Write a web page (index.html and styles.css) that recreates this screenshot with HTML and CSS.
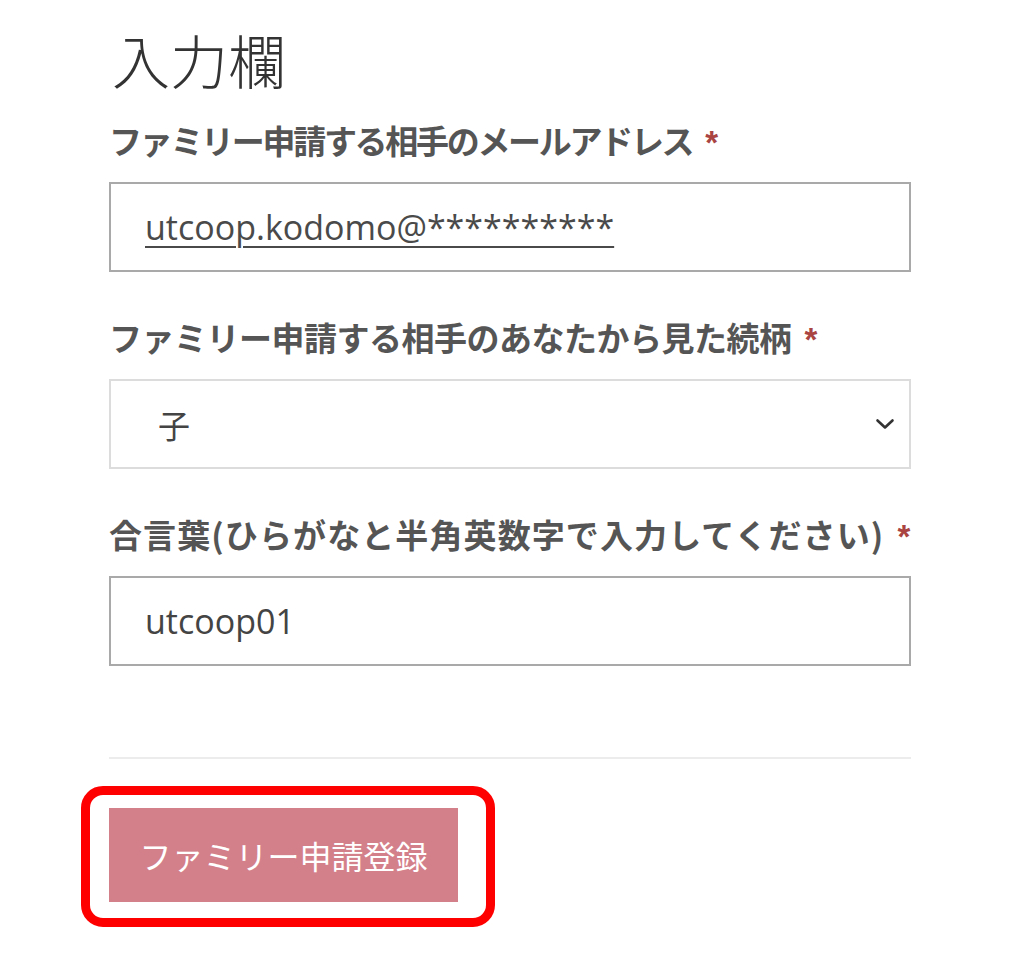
FILE: index.html
```html
<!DOCTYPE html>
<html lang="ja">
<head>
<meta charset="utf-8">
<title>入力欄</title>
<link rel="stylesheet" href="styles.css">
</head>
<body>
<main class="page">
  <h1 class="title">入力欄</h1>

  <div class="field">
    <div class="label label-mail">ファミリー申請する相手のメールアドレス<span class="req">*</span></div>
    <div class="box box-input"><span class="value value-link">utcoop.kodomo@**********</span></div>
  </div>

  <div class="field">
    <div class="label label-relation">ファミリー申請する相手のあなたから見た続柄<span class="req">*</span></div>
    <div class="box box-select">
      <span class="select-value">子</span>
      <svg class="chevron" width="20" height="12" viewBox="0 0 20 12" aria-hidden="true"><path d="M2.5 2.5 L10 9.5 L17.5 2.5" fill="none" stroke="#333" stroke-width="2.6" stroke-linecap="round" stroke-linejoin="round"/></svg>
    </div>
  </div>

  <div class="field">
    <div class="label label-pass">合言葉(ひらがなと半角英数字で入力してください)<span class="req">*</span></div>
    <div class="box box-input"><span class="value">utcoop01</span></div>
  </div>

  <div class="divider"></div>

  <div class="highlight">
    <button class="submit" type="button">ファミリー申請登録</button>
  </div>
</main>
</body>
</html>
```

FILE: styles.css
```css
html, body {
  margin: 0;
  padding: 0;
  background: #ffffff;
}

body {
  font-family: "Noto Sans CJK JP", "Noto Sans", sans-serif;
  color: #333;
}

.page {
  width: 802px;
  padding: 24px 0 0 109px;
}

.title {
  margin: 0 0 26px 3px;
  font-size: 58px;
  line-height: 70px;
  font-weight: 300;
  color: #333;
}

.field {
  margin-bottom: 45px;
}

.field:last-of-type {
  margin-bottom: 0;
}

.label {
  font-size: 33px;
  line-height: 40px;
  font-weight: 700;
  color: #555;
  margin-bottom: 19px;
  white-space: nowrap;
}

.label-mail {
  letter-spacing: -2.3px;
}

.label-relation {
  letter-spacing: -0.5px;
}

.label-pass {
  letter-spacing: 1.1px;
}

.req {
  color: #a94442;
  margin-left: 13px;
  letter-spacing: 0;
  font-family: "Liberation Sans", sans-serif;
  font-weight: 700;
}

.box {
  box-sizing: border-box;
  height: 90px;
  width: 802px;
  display: flex;
  align-items: center;
  background: #fff;
}

.box-input {
  border: 2px solid #a9a9a9;
  padding-left: 34px;
}

.box-select {
  border: 2px solid #dcdcdc;
  padding: 0 14px 0 47px;
  justify-content: space-between;
}

.value {
  font-family: "Open Sans", "Noto Sans", sans-serif;
  font-size: 34px;
  color: #444;
  line-height: 1;
}

.value-link {
  text-decoration: underline;
  text-decoration-thickness: 2px;
  text-underline-offset: 6px;
  color: #4a4a4a;
}

.select-value {
  font-size: 32px;
  color: #444;
}

.chevron {
  display: block;
}

.divider {
  margin-top: 91px;
  border-top: 2px solid #ececec;
  width: 802px;
}

.highlight {
  display: inline-block;
  margin: 27px 0 0 -28px;
  padding: 13px 28px 16px 19px;
  border: 9px solid #ff0000;
  border-radius: 22px;
}

.submit {
  display: block;
  width: 349px;
  height: 94px;
  border: none;
  background: #d4808a;
  color: #fff;
  font-family: "Noto Sans CJK JP", sans-serif;
  font-size: 32px;
  font-weight: 400;
  padding: 0;
}
```
